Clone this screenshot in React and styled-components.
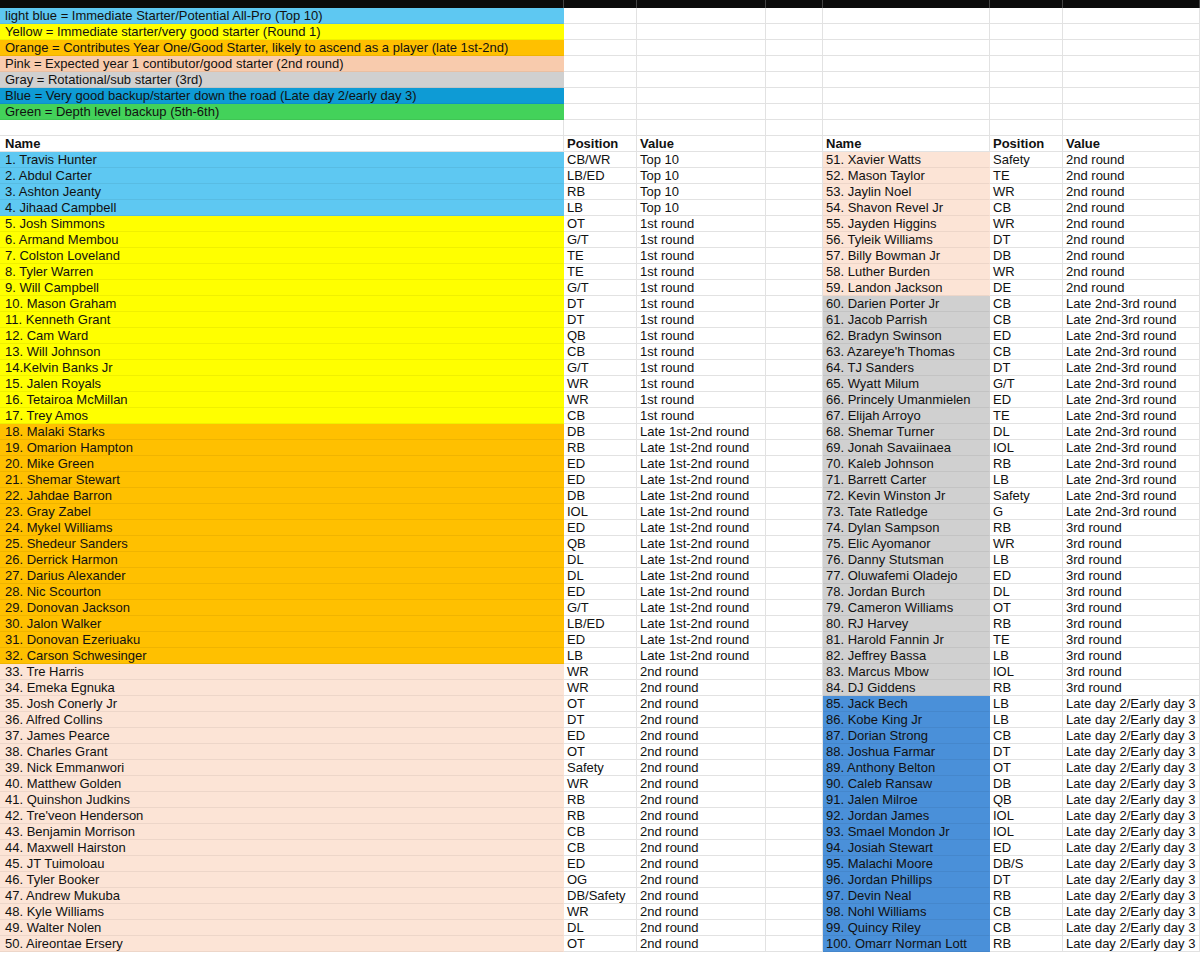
import React from "react";
import styled, { createGlobalStyle } from "styled-components";

const Global = createGlobalStyle`
  body { margin: 0; background: #fff; font-family: "Liberation Sans Narrow", "Liberation Sans", Arial, sans-serif; }
`;

const C = {
  lb: "#5ec8f2", y: "#ffff00", o: "#ffc000", p: "#f8cbad", pl: "#fce4d6",
  g: "#d0d0d0", b: "#0e9bd5", bd: "#4a90d9", gr: "#43d25a",
};

const legend = [
  ["lb", "light blue = Immediate Starter/Potential All-Pro (Top 10)"],
  ["y", "Yellow = Immediate starter/very good starter (Round 1)"],
  ["o", "Orange = Contributes Year One/Good Starter, likely to ascend as a player (late 1st-2nd)"],
  ["p", "Pink = Expected year 1 contibutor/good starter (2nd round)"],
  ["g", "Gray = Rotational/sub starter (3rd)"],
  ["b", "Blue = Very good backup/starter down the road (Late day 2/early day 3)"],
  ["gr", "Green = Depth level backup (5th-6th)"],
];

const left = `1. Travis Hunter|CB/WR
2. Abdul Carter|LB/ED
3. Ashton Jeanty|RB
4. Jihaad Campbell|LB
5. Josh Simmons|OT
6. Armand Membou|G/T
7. Colston Loveland|TE
8. Tyler Warren|TE
9. Will Campbell|G/T
10. Mason Graham|DT
11. Kenneth Grant|DT
12. Cam Ward|QB
13. Will Johnson|CB
14.Kelvin Banks Jr|G/T
15. Jalen Royals|WR
16. Tetairoa McMillan|WR
17. Trey Amos|CB
18. Malaki Starks|DB
19. Omarion Hampton|RB
20. Mike Green|ED
21. Shemar Stewart|ED
22. Jahdae Barron|DB
23. Gray Zabel|IOL
24. Mykel Williams|ED
25. Shedeur Sanders|QB
26. Derrick Harmon|DL
27. Darius Alexander|DL
28. Nic Scourton|ED
29. Donovan Jackson|G/T
30. Jalon Walker|LB/ED
31. Donovan Ezeriuaku|ED
32. Carson Schwesinger|LB
33. Tre Harris|WR
34. Emeka Egnuka|WR
35. Josh Conerly Jr|OT
36. Alfred Collins|DT
37. James Pearce|ED
38. Charles Grant|OT
39. Nick Emmanwori|Safety
40. Matthew Golden|WR
41. Quinshon Judkins|RB
42. Tre'veon Henderson|RB
43. Benjamin Morrison|CB
44. Maxwell Hairston|CB
45. JT Tuimoloau|ED
46. Tyler Booker|OG
47. Andrew Mukuba|DB/Safety
48. Kyle Williams|WR
49. Walter Nolen|DL
50. Aireontae Ersery|OT`.split("\n").map((l) => l.split("|"));

const right = `51. Xavier Watts|Safety
52. Mason Taylor|TE
53. Jaylin Noel|WR
54. Shavon Revel Jr|CB
55. Jayden Higgins|WR
56. Tyleik Williams|DT
57. Billy Bowman Jr|DB
58. Luther Burden|WR
59. Landon Jackson|DE
60. Darien Porter Jr|CB
61. Jacob Parrish|CB
62. Bradyn Swinson|ED
63. Azareye'h Thomas|CB
64. TJ Sanders|DT
65. Wyatt Milum|G/T
66. Princely Umanmielen|ED
67. Elijah Arroyo|TE
68. Shemar Turner|DL
69. Jonah Savaiinaea|IOL
70. Kaleb Johnson|RB
71. Barrett Carter|LB
72. Kevin Winston Jr|Safety
73. Tate Ratledge|G
74. Dylan Sampson|RB
75. Elic Ayomanor|WR
76. Danny Stutsman|LB
77. Oluwafemi Oladejo|ED
78. Jordan Burch|DL
79. Cameron Williams|OT
80. RJ Harvey|RB
81. Harold Fannin Jr|TE
82. Jeffrey Bassa|LB
83. Marcus Mbow|IOL
84. DJ Giddens|RB
85. Jack Bech|LB
86. Kobe King Jr|LB
87. Dorian Strong|CB
88. Joshua Farmar|DT
89. Anthony Belton|OT
90. Caleb Ransaw|DB
91. Jalen Milroe|QB
92. Jordan James|IOL
93. Smael Mondon Jr|IOL
94. Josiah Stewart|ED
95. Malachi Moore|DB/S
96. Jordan Phillips|DT
97. Devin Neal|RB
98. Nohl Williams|CB
99. Quincy Riley|CB
100. Omarr Norman Lott|RB`.split("\n").map((l) => l.split("|"));

function tier(n) {
  if (n <= 4) return ["lb", "Top 10"];
  if (n <= 17) return ["y", "1st round"];
  if (n <= 32) return ["o", "Late 1st-2nd round"];
  if (n <= 59) return ["pl", "2nd round"];
  if (n <= 73) return ["g", "Late 2nd-3rd round"];
  if (n <= 84) return ["g", "3rd round"];
  return ["bd", "Late day 2/Early day 3"];
}

const Sheet = styled.div`
  display: grid;
  grid-template-columns: 564px 73px 129px 57px 167px 73px 137px;
  grid-auto-rows: 16px;
  font-size: 13px;
  color: #111;
  width: 1200px;
  overflow: hidden;
`;

const TopBar = styled.div`
  grid-column: 1 / -1;
  height: 8px;
  background: #0b0b0b;
  display: grid;
  grid-template-columns: 564px 73px 129px 57px 167px 73px 137px;
  & > div { border-right: 1px solid #444; }
`;

const Cell = styled.div`
  background: ${(p) => (p.$fill ? C[p.$fill] : "#fff")};
  border-bottom: 1px solid ${(p) => (p.$fill ? "rgba(0,0,0,0.06)" : "#e2e2e2")};
  border-right: 1px solid ${(p) => (p.$fill ? "transparent" : "#e2e2e2")};
  padding-left: ${(p) => (p.$first ? 5 : 3)}px;
  line-height: 16px;
  white-space: nowrap;
  overflow: hidden;
  font-weight: ${(p) => (p.$bold ? 700 : 400)};
  box-sizing: border-box;
`;

export default function App() {
  const rows = [];
  legend.forEach(([f, t], i) => {
    rows.push(<Cell key={"l" + i} $fill={f} $first>{t}</Cell>);
    for (let k = 0; k < 6; k++) rows.push(<Cell key={"l" + i + k} />);
  });
  for (let k = 0; k < 7; k++) rows.push(<Cell key={"b" + k} />);
  ["Name", "Position", "Value", "", "Name", "Position", "Value"].forEach((h, k) =>
    rows.push(<Cell key={"h" + k} $bold $first={k === 0}>{h}</Cell>)
  );
  for (let i = 0; i < 50; i++) {
    const [lf, lv] = tier(i + 1);
    const [rf, rv] = tier(i + 51);
    rows.push(<Cell key={"a" + i} $fill={lf} $first>{left[i][0]}</Cell>);
    rows.push(<Cell key={"p" + i}>{left[i][1]}</Cell>);
    rows.push(<Cell key={"v" + i}>{lv}</Cell>);
    rows.push(<Cell key={"d" + i} />);
    rows.push(<Cell key={"e" + i} $fill={rf}>{right[i][0]}</Cell>);
    rows.push(<Cell key={"f" + i}>{right[i][1]}</Cell>);
    rows.push(<Cell key={"g" + i}>{rv}</Cell>);
  }
  return (
    <>
      <Global />
      <TopBar>{Array.from({ length: 7 }, (_, i) => <div key={i} />)}</TopBar>
      <Sheet>{rows}</Sheet>
    </>
  );
}
